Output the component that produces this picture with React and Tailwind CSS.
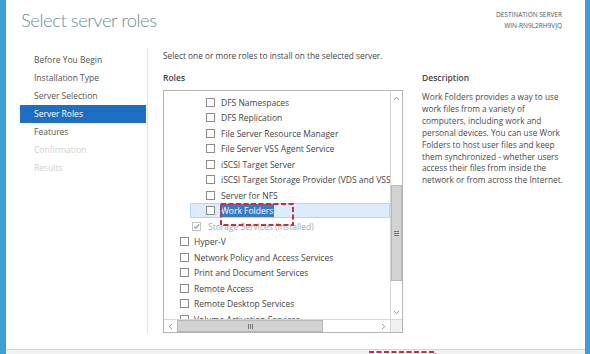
import React from "react";

const F = { fontFamily: '"Open Sans", "Noto Sans", sans-serif' };

function Box({ checked, disabled }) {
  return (
    <span
      className={`inline-flex items-center justify-center w-[9px] h-[9px] border bg-white shrink-0 ${
        disabled ? "border-[#c4c4c4]" : "border-[#8c8c8c]"
      }`}
    >
      {checked && (
        <svg width="7" height="7" viewBox="0 0 7 7">
          <path d="M1 3.6 L2.8 5.4 L6 1.4" fill="none" stroke="#9a9a9a" strokeWidth="1.1" />
        </svg>
      )}
    </span>
  );
}

const rows = [
  { t: "DFS Namespaces", lvl: 2 },
  { t: "DFS Replication", lvl: 2 },
  { t: "File Server Resource Manager", lvl: 2 },
  { t: "File Server VSS Agent Service", lvl: 2 },
  { t: "iSCSI Target Server", lvl: 2 },
  { t: "iSCSI Target Storage Provider (VDS and VSS hardware providers)", lvl: 2 },
  { t: "Server for NFS", lvl: 2 },
  { t: "Work Folders", lvl: 2, sel: true },
  { t: "Storage Services (Installed)", lvl: 1, checked: true, disabled: true },
  { t: "Hyper-V", lvl: 0 },
  { t: "Network Policy and Access Services", lvl: 0 },
  { t: "Print and Document Services", lvl: 0 },
  { t: "Remote Access", lvl: 0 },
  { t: "Remote Desktop Services", lvl: 0 },
  { t: "Volume Activation Services", lvl: 0 },
];

const lvlPad = ["pl-[16px]", "pl-[28px]", "pl-[42px]"];
const lvlGap = ["gap-[5px]", "gap-[7px]", "gap-[6px]"];

function Row({ r }) {
  return (
    <div className={`h-[15.5px] flex items-center whitespace-nowrap ${lvlPad[r.lvl]} ${lvlGap[r.lvl]} relative`}>
      {r.sel && (
        <div className="absolute left-[26px] right-0 top-0 bottom-0 bg-[#dcecfc] border border-[#b7d6f4]" />
      )}
      <span className="relative flex">
        <Box checked={r.checked} disabled={r.disabled} />
      </span>
      <span
        className={`relative leading-[13px] ${
          r.sel ? "bg-[#3a79c9] text-white px-[1px] -ml-[1px]" : r.disabled ? "text-[#a8a8a8]" : "text-[#444]"
        }`}
      >
        {r.t}
      </span>
    </div>
  );
}

export default function App() {
  const nav = [
    { t: "Before You Begin" },
    { t: "Installation Type" },
    { t: "Server Selection" },
    { t: "Server Roles", active: true },
    { t: "Features" },
    { t: "Confirmation", dim: true },
    { t: "Results", dim: true },
  ];
  const desc =
    "Work Folders provides a way to use work files from a variety of computers, including work and personal devices. You can use Work Folders to host user files and keep them synchronized - whether users access their files from inside the network or from across the Internet.";
  return (
    <div
      style={F}
      className="relative w-[590px] h-[354px] overflow-hidden bg-white flex flex-col border-l-[6px] border-r-[5px] border-[#3b9fd4]"
    >
      {/* header */}
      <div className="h-[46px] flex justify-between shrink-0">
        <div
          style={{ fontFamily: 'Lato, "Open Sans", sans-serif' }}
          className="pl-[15px] pt-[7px] text-[18.5px] tracking-[-0.5px] font-light text-[#6e8d9a]"
        >
          Select server roles
        </div>
        <div className="pr-[23px] pt-[9px] text-right text-[6.5px] leading-[11px] text-[#555]">
          <div>DESTINATION SERVER</div>
          <div>WIN-RN9L2RH9VJQ</div>
        </div>
      </div>

      {/* body */}
      <div className="flex-1 flex">
        <div className="w-[142px] shrink-0 pt-[5px] pb-[16px] flex">
          <div className="flex-1 flex flex-col">
            {nav.map((n) => (
              <div
                key={n.t}
                className={`ml-[14px] w-[126px] h-[18px] pl-[14px] flex items-center text-[8.5px] ${
                  n.active ? "bg-[#1e6ec1] text-white" : n.dim ? "text-[#cfcfcf]" : "text-[#555]"
                }`}
              >
                {n.t}
              </div>
            ))}
          </div>
          <div className="w-[1px] bg-[#e2e2e2] mt-[-3px]" />
        </div>

        <div className="flex-1 pl-[15px] pt-[4px] flex flex-col">
          <div className="text-[8.3px] leading-[12px] text-[#444]">
            Select one or more roles to install on the selected server.
          </div>
          <div className="flex mt-[10px]">
            <div className="w-[240px] shrink-0">
              <div className="text-[8.5px] leading-[12px] font-semibold text-[#444] h-[18px]">Roles</div>
              <div className="relative h-[243px] border border-[#b4b4b4] flex flex-col">
                <div className="flex-1 flex min-h-0">
                  <div className="flex-1 overflow-hidden pt-[3.25px] text-[8.5px]">
                    {rows.map((r) => (
                      <Row key={r.t} r={r} />
                    ))}
                  </div>
                  {/* vertical scrollbar */}
                  <div className="w-[12px] shrink-0 border-l border-[#d6d6d6] bg-white flex flex-col">
                    <div className="h-[14px] flex items-center justify-center">
                      <svg width="7" height="5" viewBox="0 0 7 5">
                        <path d="M1 4 L3.5 1.2 L6 4" fill="none" stroke="#8a8a8a" strokeWidth="0.9" />
                      </svg>
                    </div>
                    <div className="h-[80px]" />
                    <div className="h-[96px] bg-[#d2d2d2] border border-[#b8b8b8] flex items-center justify-center">
                      <svg width="5" height="5" viewBox="0 0 5 5">
                        <path d="M0 0.5 H5 M0 2.5 H5 M0 4.5 H5" stroke="#6a6a6a" strokeWidth="0.9" />
                      </svg>
                    </div>
                    <div className="flex-1" />
                    <div className="h-[14px] flex items-center justify-center">
                      <svg width="7" height="5" viewBox="0 0 7 5">
                        <path d="M1 1 L3.5 3.8 L6 1" fill="none" stroke="#8a8a8a" strokeWidth="0.9" />
                      </svg>
                    </div>
                  </div>
                </div>
                {/* horizontal scrollbar */}
                <div className="h-[13px] shrink-0 flex border-t border-[#d6d6d6] bg-white">
                  <div className="w-[13px] flex items-center justify-center">
                    <svg width="5" height="7" viewBox="0 0 5 7">
                      <path d="M4 1 L1.2 3.5 L4 6" fill="none" stroke="#8a8a8a" strokeWidth="0.9" />
                    </svg>
                  </div>
                  <div className="w-[146px] bg-[#d2d2d2] border border-[#b8b8b8] flex items-center justify-center">
                    <svg width="5" height="5" viewBox="0 0 5 5">
                      <path d="M0.5 0 V5 M2.5 0 V5 M4.5 0 V5" stroke="#6a6a6a" strokeWidth="0.9" />
                    </svg>
                  </div>
                  <div className="flex-1" />
                  <div className="w-[14px] flex items-center justify-center">
                    <svg width="5" height="7" viewBox="0 0 5 7">
                      <path d="M1 1 L3.8 3.5 L1 6" fill="none" stroke="#8a8a8a" strokeWidth="0.9" />
                    </svg>
                  </div>
                  <div className="w-[12px] bg-[#f0f0f0] border-l border-[#d6d6d6]" />
                </div>
                {/* annotation */}
                <svg className="absolute left-[56px] top-[112px]" width="74" height="23" viewBox="0 0 74 23">
                  <rect x="1" y="1" width="72" height="21" fill="none" stroke="#c5303c" strokeWidth="2" strokeDasharray="5 2.5" />
                </svg>
              </div>
            </div>
            <div className="pl-[19px] w-[164px]">
              <div className="text-[8.5px] leading-[12px] font-semibold text-[#444] h-[19px]">Description</div>
              <div className="text-[8.3px] leading-[11.9px] text-[#4a4a4a]">{desc}</div>
            </div>
          </div>
        </div>
      </div>

      {/* footer */}
      <div className="h-[5px] shrink-0 bg-[#f2f2f2] border-t border-[#d4d4d4]" />
      <svg className="absolute left-[362px] top-[350px]" width="68" height="10" viewBox="0 0 68 10">
        <rect x="1" y="2" width="66" height="20" fill="none" stroke="#c5303c" strokeWidth="2" strokeDasharray="5 2.5" />
      </svg>
    </div>
  );
}
